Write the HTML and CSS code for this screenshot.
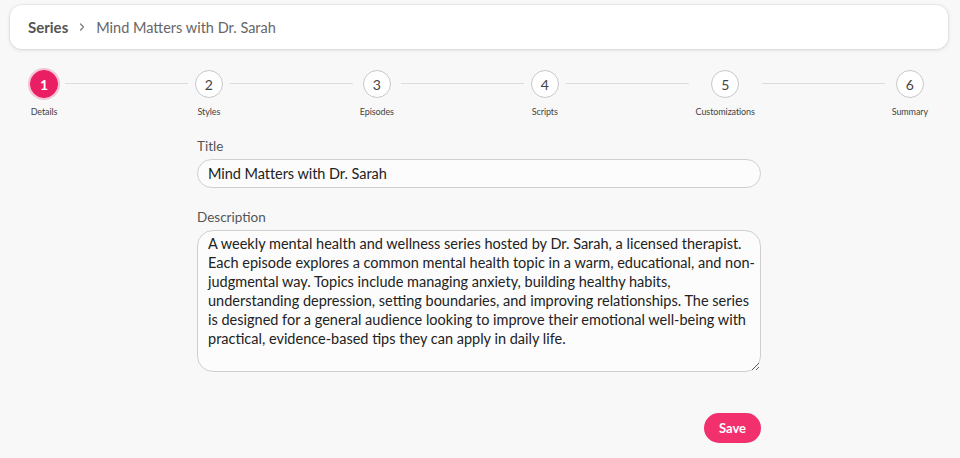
FILE: index.html
```html
<!DOCTYPE html>
<html lang="en">
<head>
<meta charset="utf-8">
<title>Mind Matters with Dr. Sarah</title>
<link rel="stylesheet" href="styles.css">
</head>
<body>
<div class="page">
  <header class="crumbs">
    <span class="crumb-root">Series</span>
    <svg class="chev" width="8" height="10" viewBox="0 0 8 10"><path d="M2.5 2 L5.5 5 L2.5 8" fill="none" stroke="#777" stroke-width="1.2" stroke-linecap="round" stroke-linejoin="round"/></svg>
    <span class="crumb-current">Mind Matters with Dr. Sarah</span>
  </header>

  <nav class="stepper">
    <div class="step active"><span class="dot">1</span><span class="label">Details</span></div>
    <div class="line"></div>
    <div class="step"><span class="dot">2</span><span class="label">Styles</span></div>
    <div class="line"></div>
    <div class="step"><span class="dot">3</span><span class="label">Episodes</span></div>
    <div class="line"></div>
    <div class="step"><span class="dot">4</span><span class="label">Scripts</span></div>
    <div class="line"></div>
    <div class="step"><span class="dot">5</span><span class="label">Customizations</span></div>
    <div class="line"></div>
    <div class="step"><span class="dot">6</span><span class="label">Summary</span></div>
  </nav>

  <form class="form">
    <label class="field">
      <span class="field-label">Title</span>
      <input class="input" type="text" value="Mind Matters with Dr. Sarah">
    </label>
    <label class="field">
      <span class="field-label">Description</span>
      <textarea class="textarea" wrap="off">A weekly mental health and wellness series hosted by Dr. Sarah, a licensed therapist.
Each episode explores a common mental health topic in a warm, educational, and non-
judgmental way. Topics include managing anxiety, building healthy habits,
understanding depression, setting boundaries, and improving relationships. The series
is designed for a general audience looking to improve their emotional well-being with
practical, evidence-based tips they can apply in daily life.</textarea>
    </label>
    <div class="actions">
      <button class="save" type="button">Save</button>
    </div>
  </form>
</div>
</body>
</html>
```

FILE: styles.css
```css
* { box-sizing: border-box; }
html, body { margin: 0; padding: 0; background: #f8f8f8; }
body {
  font-family: Lato, "Noto Sans", sans-serif;
  color: #333;
  width: 960px;
  height: 458px;
  overflow: hidden;
}
.page {
  padding: 5px 12px 0 10px;
}
.crumbs {
  height: 44px;
  background: #fff;
  border-radius: 12px;
  box-shadow: 0 1px 4px rgba(0,0,0,0.12), 0 0 0 1px rgba(0,0,0,0.04);
  display: flex;
  align-items: center;
  padding-left: 18px;
  font-size: 14.5px;
}
.crumb-root { font-weight: 700; color: #555; font-size: 15px; }
.chev { margin: 0 10px 0 10px; }
.crumb-current { color: #666; }

.stepper {
  display: flex;
  align-items: flex-start;
  padding: 21px 20px 0 20px;
}
.step {
  display: flex;
  flex-direction: column;
  align-items: center;
}
.dot {
  width: 28px;
  height: 28px;
  border-radius: 50%;
  border: 1px solid #c8c8c8;
  background: #fff;
  display: flex;
  align-items: center;
  justify-content: center;
  font-size: 14px;
  font-weight: 400;
  color: #444;
}
.step.active .dot {
  background: #e91e63;
  border-color: #e91e63;
  color: #fff;
  font-weight: 700;
  box-shadow: 0 0 0 2px rgba(233,30,99,0.25);
}
.label {
  margin-top: 8px;
  font-size: 9px;
  letter-spacing: -0.1px;
  color: #444;
  white-space: nowrap;
}
.line {
  flex: 1;
  height: 1px;
  background: #dcdcdc;
  margin: 13px 7px 0 7px;
}

.form {
  width: 564px;
  margin: 21px auto 0;
  display: flex;
  flex-direction: column;
}
.field {
  display: flex;
  flex-direction: column;
  margin-bottom: 21px;
}
.field-label {
  font-size: 13.5px;
  color: #555;
  margin-bottom: 5px;
}
.input {
  height: 29px;
  border-radius: 15px;
  border: 1px solid #cfcfcf;
  background: #fcfcfc;
  padding: 0 10px;
  font-family: inherit;
  font-size: 14.5px;
  letter-spacing: -0.05px;
  color: #222;
  outline: none;
}
.textarea {
  height: 142px;
  border-radius: 16px;
  border: 1px solid #cfcfcf;
  background: #fcfcfc;
  padding: 3px 10px;
  font-family: inherit;
  font-size: 14.5px;
  line-height: 19px;
  color: #222;
  overflow: hidden;
  outline: none;
  resize: vertical;
}
.actions {
  display: flex;
  justify-content: flex-end;
  margin-top: 20px;
}
.save {
  height: 30px;
  padding: 0 15px;
  border: none;
  border-radius: 15px;
  background: #f2306e;
  color: #fff;
  font-family: inherit;
  font-weight: 700;
  font-size: 13px;
}
```
